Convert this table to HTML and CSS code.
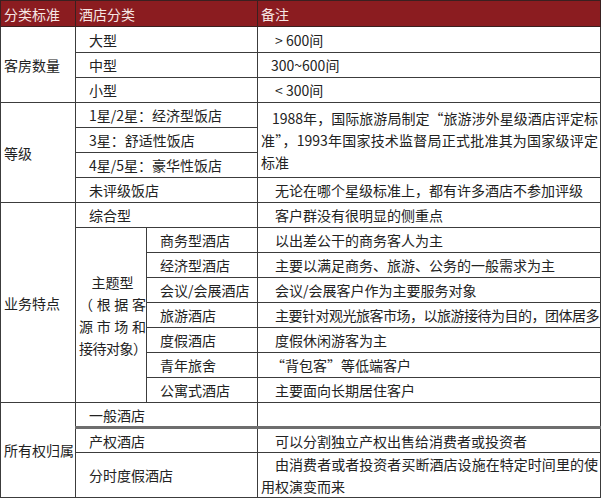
FILE: index.html
```html
<!DOCTYPE html>
<html lang="zh-CN">
<head>
<meta charset="utf-8">
<title>酒店分类</title>
<link rel="stylesheet" href="styles.css">
</head>
<body>
<table class="grid">
  <colgroup><col class="c1"><col class="c2a"><col class="c2b"><col class="c3"></colgroup>
  <thead>
    <tr class="head">
      <th class="h1">分类标准</th>
      <th colspan="2" class="h2">酒店分类</th>
      <th class="h3">备注</th>
    </tr>
  </thead>
  <tbody>
    <tr class="r26">
      <td rowspan="3" class="cat">客房数量</td>
      <td colspan="2" class="sub">大型</td>
      <td class="note">&gt; 600间</td>
    </tr>
    <tr><td colspan="2" class="sub">中型</td><td class="note n-tight">300~600间</td></tr>
    <tr><td colspan="2" class="sub">小型</td><td class="note">&lt; 300间</td></tr>

    <tr>
      <td rowspan="4" class="cat">等级</td>
      <td colspan="2" class="sub">1星/2星：经济型饭店</td>
      <td rowspan="3" class="note para thick-top">
        <span class="ln first">1988年，国际旅游局制定“旅游涉外星级酒店评定标</span>
        <span class="ln">准”，1993年国家技术监督局正式批准其为国家级评定</span>
        <span class="ln last">标准</span>
      </td>
    </tr>
    <tr><td colspan="2" class="sub">3星：舒适性饭店</td></tr>
    <tr><td colspan="2" class="sub">4星/5星：豪华性饭店</td></tr>
    <tr><td colspan="2" class="sub">未评级饭店</td><td class="note thick-top">无论在哪个星级标准上，都有许多酒店不参加评级</td></tr>

    <tr>
      <td rowspan="8" class="cat">业务特点</td>
      <td colspan="2" class="sub">综合型</td>
      <td class="note">客户群没有很明显的侧重点</td>
    </tr>
    <tr>
      <td rowspan="7" class="theme">
        <span class="t-title">主题型</span>
        <span class="t-line">（根据客</span>
        <span class="t-line">源市场和</span>
        <span class="t-line t-last">接待对象）</span>
      </td>
      <td class="sub">商务型酒店</td>
      <td class="note">以出差公干的商务客人为主</td>
    </tr>
    <tr><td class="sub">经济型酒店</td><td class="note">主要以满足商务、旅游、公务的一般需求为主</td></tr>
    <tr><td class="sub">会议/会展酒店</td><td class="note">会议/会展客户作为主要服务对象</td></tr>
    <tr><td class="sub">旅游酒店</td><td class="note n-long">主要针对观光旅客市场，以旅游接待为目的，团体居多</td></tr>
    <tr><td class="sub">度假酒店</td><td class="note">度假休闲游客为主</td></tr>
    <tr><td class="sub">青年旅舍</td><td class="note n-tight">“背包客”等低端客户</td></tr>
    <tr><td class="sub">公寓式酒店</td><td class="note">主要面向长期居住客户</td></tr>

    <tr>
      <td rowspan="3" class="cat">所有权归属</td>
      <td colspan="2" class="sub">一般酒店</td>
      <td class="note"></td>
    </tr>
    <tr class="thick-row"><td colspan="2" class="sub">产权酒店</td><td class="note">可以分割独立产权出售给消费者或投资者</td></tr>
    <tr class="r45">
      <td colspan="2" class="sub">分时度假酒店</td>
      <td class="note para2">
        <span class="ln first">由消费者或者投资者买断酒店设施在特定时间里的使</span>
        <span class="ln last">用权演变而来</span>
      </td>
    </tr>
  </tbody>
</table>
</body>
</html>
```

FILE: styles.css
```css
html, body {
  margin: 0;
  padding: 0;
  background: #ffffff;
}

body {
  font-family: "Noto Sans CJK SC", "Liberation Sans", sans-serif;
  font-size: 14px;
  color: #222222;
}

.grid {
  border-collapse: collapse;
  table-layout: fixed;
  width: 600px;
}

.c1 { width: 75px; }
.c2a { width: 71px; }
.c2b { width: 111px; }
.c3 { width: 343px; }

.grid th,
.grid td {
  border: 1px solid #3c3c3c;
  padding: 0 0 0 3px;
  white-space: nowrap;
  overflow: hidden;
  vertical-align: middle;
  text-align: left;
  line-height: 22px;
  font-weight: normal;
}

.grid tr { height: 25px; }
.grid tr.head { height: 26px; }
.grid tr.r26 { height: 26px; }
.grid tr.r45 { height: 45px; }

.head th {
  background: #8b1c20;
  color: #f6e6e4;
  border-color: #3a2020;
}

.h2 { padding-left: 4px; }
.h3 { padding-left: 3px; }

.cat {
  padding-left: 3px;
}

.sub {
  text-indent: 10px;
}

.note {
  padding-left: 1px;
  text-indent: 14px;
}

.note.n-tight {
  text-indent: 10px;
}

.note.n-long {
  letter-spacing: -0.5px;
}

.para {
  vertical-align: top;
  padding-top: 2px;
  text-indent: 0;
}

.para2 {
  text-indent: 0;
}

.ln {
  display: block;
  white-space: nowrap;
  padding-right: 2px;
}

.ln.first {
  text-indent: 11px;
  text-align: justify;
  text-align-last: justify;
}

.para2 .ln.first {
  text-indent: 14px;
}

.para .ln:nth-child(2) {
  text-align: justify;
  text-align-last: justify;
}

.ln.last {
  text-align: left;
}

.theme {
  padding: 0 1px 0 3px;
  line-height: 21px;
}

.t-title {
  display: block;
  text-align: center;
}

.t-line {
  display: block;
  text-align: justify;
  text-align-last: justify;
}

.t-last {
  letter-spacing: -1px;
}

.thick-top {
  border-top: 2px solid #7a7a7a;
}

.thick-row td {
  border-top: 3px solid #6e6e6e;
}
```
